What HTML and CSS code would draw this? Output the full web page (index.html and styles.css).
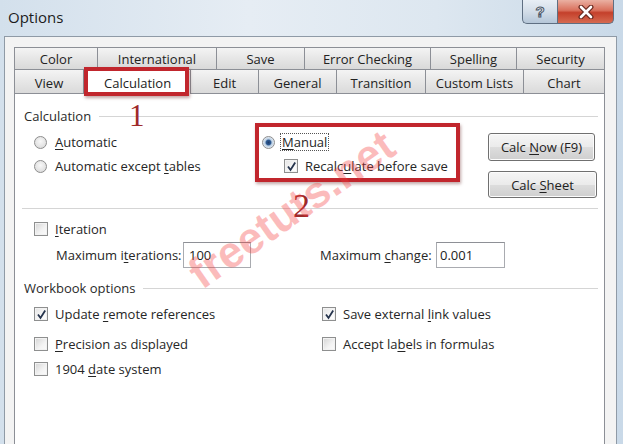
FILE: index.html
```html
<!DOCTYPE html>
<html>
<head>
<meta charset="utf-8">
<title>Options</title>
<link rel="stylesheet" href="styles.css">
</head>
<body>
<div class="window">
  <div class="titlebar">
    <span class="title">Options</span>
    <div class="caption-btns">
      <div class="cbtn help"><span class="qmark">?</span></div>
      <div class="cbtn close">
        <svg width="18" height="14" viewBox="0 0 18 14">
          <path d="M4 2 L14 12 M14 2 L4 12" stroke="#6a2a20" stroke-width="5" stroke-linecap="round" fill="none"/>
          <path d="M4 2 L14 12 M14 2 L4 12" stroke="#ffffff" stroke-width="2.6" stroke-linecap="round" fill="none"/>
        </svg>
      </div>
    </div>
  </div>

  <div class="frame">
    <div class="tabs">
      <div class="tabrow row1">
        <div class="tab">Color</div>
        <div class="tab">International</div>
        <div class="tab">Save</div>
        <div class="tab">Error Checking</div>
        <div class="tab">Spelling</div>
        <div class="tab">Security</div>
      </div>
      <div class="tabrow row2">
        <div class="tab">View</div>
        <div class="tab active">Calculation</div>
        <div class="tab">Edit</div>
        <div class="tab">General</div>
        <div class="tab">Transition</div>
        <div class="tab">Custom Lists</div>
        <div class="tab">Chart</div>
      </div>
    </div>

    <div class="panel">
      <div class="group-head"><span>Calculation</span><span class="rule"></span></div>

      <div class="calc">
        <div class="col-left">
          <div class="opt"><span class="radio"></span><span><u>A</u>utomatic</span></div>
          <div class="opt"><span class="radio"></span><span>Automatic except <u>t</u>ables</span></div>
        </div>
        <div class="col-mid">
          <div class="opt"><span class="radio on"></span><span class="focus"><u>M</u>anual</span></div>
          <div class="opt sub">
            <span class="check on"><svg width="11" height="11" viewBox="0 0 11 11"><path d="M2 5.5 L4.5 9 L9.2 1.5" stroke="#26344d" stroke-width="1.8" fill="none"/></svg></span>
            <span>Recalc<u>u</u>late before save</span>
          </div>
        </div>
        <div class="col-btns">
          <div class="btn b1"><span>Calc <u>N</u>ow (F9)</span></div>
          <div class="btn b2"><span>Calc <u>S</u>heet</span></div>
        </div>
      </div>

      <div class="sep"></div>

      <div class="opt iter"><span class="check"></span><span><u>I</u>teration</span></div>
      <div class="maxrow">
        <span class="lbl1">Maximum i<u>t</u>erations:</span>
        <span class="field f1">100</span>
        <span class="lbl2">Maximum <u>c</u>hange:</span>
        <span class="field f2">0.001</span>
      </div>

      <div class="group-head wb"><span>Workbook options</span><span class="rule"></span></div>

      <div class="wbgrid">
        <div class="opt r1"><span class="check on"><svg width="11" height="11" viewBox="0 0 11 11"><path d="M2 5.5 L4.5 9 L9.2 1.5" stroke="#26344d" stroke-width="1.8" fill="none"/></svg></span><span>Update <u>r</u>emote references</span></div>
        <div class="opt r1"><span class="check on"><svg width="11" height="11" viewBox="0 0 11 11"><path d="M2 5.5 L4.5 9 L9.2 1.5" stroke="#26344d" stroke-width="1.8" fill="none"/></svg></span><span>Save external <u>l</u>ink values</span></div>
        <div class="opt r2"><span class="check"></span><span><u>P</u>recision as displayed</span></div>
        <div class="opt r2"><span class="check"></span><span>Accept la<u>b</u>els in formulas</span></div>
        <div class="opt r3"><span class="check"></span><span>1904 <u>d</u>ate system</span></div>
      </div>
    </div>
  </div>
</div>

<div class="annot">
  <div class="redbox box1"></div>
  <div class="redbox box2"></div>
  <div class="num n1">1</div>
  <div class="num n2">2</div>
  <div class="watermark">freetuts.net</div>
</div>
</body>
</html>
```

FILE: styles.css
```css
* { box-sizing: border-box; }
html, body { margin: 0; padding: 0; }
body {
  width: 623px;
  height: 444px;
  overflow: hidden;
  position: relative;
  font-family: "Open Sans", "Noto Sans", sans-serif;
  font-size: 12.5px;
  color: #262626;
  background: linear-gradient(90deg, #d3e0ec 0%, #e6edf4 40%, #dde7f0 70%, #c9d9e8 100%);
}
u { text-decoration: underline; text-underline-offset: 2px; }

.window { height: 444px; display: flex; flex-direction: column; }

.titlebar {
  height: 36px;
  display: flex;
  align-items: flex-start;
  padding-left: 8px;
  flex: none;
}
.title {
  font-size: 15px;
  color: #1c1c1c;
  margin-top: 7px;
}
.caption-btns {
  margin-left: auto;
  margin-right: 9px;
  display: flex;
  height: 24px;
}
.cbtn {
  height: 24px;
  border: 1px solid #5f6f82;
  border-top: none;
  display: flex;
  align-items: center;
  justify-content: center;
}
.help {
  width: 35px;
  border-right: none;
  border-radius: 0 0 0 5px;
  background: linear-gradient(180deg, #e8eef5 0%, #d3dde8 50%, #b5c6d8 100%);
}
.qmark {
  font-family: "Liberation Sans", sans-serif;
  font-weight: bold;
  font-size: 15px;
  color: #ffffff;
  -webkit-text-stroke: 1px #4a5566;
  line-height: 1;
}
.close {
  width: 57px;
  border-radius: 0 0 5px 0;
  background: linear-gradient(180deg, #eab0a2 0%, #d9705c 45%, #c4402b 55%, #d66a50 100%);
}

.frame {
  flex: 1;
  margin: 0 6px 0 4px;
  background: #f3f3f3;
  border: 1px solid #8f9aa6;
  border-bottom: none;
  padding: 10px 11px 0 9px;
  display: flex;
  flex-direction: column;
}

.tabs { flex: none; }
.tabrow { display: grid; }
.row1 { grid-template-columns: 83px 119px 88px 126px 86px 89px; height: 22px; }
.row2 { grid-template-columns: 69px 107px 68px 78px 89px 98px 82px; height: 24px; }
.tab {
  border-top: 1px solid #8c8f96;
  border-left: 1px solid #8c8f96;
  background: linear-gradient(180deg, #f4f4f4 0%, #e6e6e6 50%, #d9d9d9 100%);
  display: flex;
  align-items: center;
  justify-content: center;
  font-size: 13px;
  color: #222;
  white-space: nowrap;
}
.tab:last-child { border-right: 1px solid #8c8f96; }
.row2 .tab { padding-top: 1px; }
.tab.active {
  background: #ffffff;
  position: relative;
  z-index: 1;
  height: 25px;
  justify-content: flex-start;
  padding-left: 20px;
}

.panel {
  flex: 1;
  background: #ffffff;
  border: 1px solid #8c8f96;
  border-bottom: none;
  padding: 12px 6px 0 9px;
}

.group-head {
  display: flex;
  align-items: center;
  height: 20px;
  color: #2a2a2a;
  font-size: 13px;
}
.group-head .rule {
  flex: 1;
  height: 1px;
  background: #d5d5d5;
  margin-left: 8px;
}

.opt {
  display: flex;
  align-items: center;
  height: 24px;
  white-space: nowrap;
  font-size: 13px;
}

.radio {
  width: 13px;
  height: 13px;
  border-radius: 50%;
  border: 1px solid #8d8d8d;
  background: radial-gradient(circle at 50% 40%, #f8f8f8 0%, #dcdcdc 80%);
  margin-right: 8px;
  flex: none;
}
.radio.on {
  background: radial-gradient(circle, #1d3b6b 0%, #2e5b93 30%, #b9cde2 45%, #eef3f8 80%);
}
.check {
  width: 14px;
  height: 14px;
  border: 1px solid #8e8f8f;
  background: linear-gradient(135deg, #d4d4d4 0%, #f3f3f3 60%, #fbfbfb 100%);
  box-shadow: inset 0 0 0 1px #f2f2f2;
  margin-right: 7px;
  flex: none;
  display: flex;
  align-items: center;
  justify-content: center;
}
.check.on { background: linear-gradient(135deg, #e4e4e4 0%, #f8f8f8 60%, #ffffff 100%); }

.calc {
  display: flex;
  margin-top: 4px;
  height: 68px;
}
.col-left { width: 238px; padding-left: 10px; }
.col-mid { width: 226px; }
.col-mid .focus {
  border: 1px dotted #555;
  padding: 0 1px;
  margin-left: -3px;
  line-height: 16px;
}
.col-mid .sub { padding-left: 22px; }
.col-btns {
  display: flex;
  flex-direction: column;
  gap: 10px;
  padding-top: 3px;
}
.btn {
  height: 28px;
  width: 107px;
  border: 1px solid #707070;
  border-radius: 3px;
  background: linear-gradient(180deg, #f6f6f6 0%, #ebebeb 50%, #dddddd 51%, #cfcfcf 100%);
  box-shadow: inset 0 0 0 1px #fcfcfc;
  display: flex;
  align-items: center;
  justify-content: center;
  font-size: 13px;
  color: #222;
  white-space: nowrap;
}
.btn.b2 { width: 109px; height: 27px; }

.sep {
  height: 1px;
  background: #d5d5d5;
  margin: 10px 0 0 -2px;
}

.iter { margin-top: 9px; height: 22px; padding-left: 10px; }

.maxrow {
  display: flex;
  align-items: center;
  height: 26px;
  margin-top: 2px;
  font-size: 13px;
  white-space: nowrap;
}
.lbl1 { margin-left: 32px; width: 127px; }
.lbl2 { margin-left: 69px; width: 116px; }
.field {
  height: 26px;
  width: 68px;
  border: 1px solid #a9abb0;
  border-top-color: #8e9096;
  background: #fff;
  display: flex;
  align-items: center;
  padding-left: 5px;
  color: #222;
}
.f2 { width: 69px; padding-left: 3px; }

.group-head.wb { margin-top: 10px; }

.wbgrid {
  display: grid;
  grid-template-columns: 288px 1fr;
  margin-top: 4px;
  padding-left: 10px;
}
.wbgrid .r2 { margin-top: 6px; }
.wbgrid .r3 { margin-top: 1px; }

.annot { position: absolute; left: 0; top: 0; width: 623px; height: 444px; pointer-events: none; z-index: 5; }
.redbox {
  position: absolute;
  border: 4px solid #c1262d;
  box-shadow: 1px 2px 3px rgba(80, 0, 0, 0.35);
}
.box1 { left: 84px; top: 67px; width: 105px; height: 29px; }
.box2 { left: 255px; top: 123px; width: 205px; height: 59px; }
.num {
  position: absolute;
  font-family: "Liberation Serif", serif;
  color: #9e2a2a;
  line-height: 1;
}
.n1 { left: 129px; top: 100px; font-size: 31px; }
.n2 { left: 293px; top: 189px; font-size: 34px; }
.watermark {
  position: absolute;
  left: 206px;
  top: 252px;
  font-family: "Liberation Sans", sans-serif;
  font-weight: bold;
  font-size: 44px;
  color: rgba(245, 60, 60, 0.34);
  transform: rotate(-35deg);
  transform-origin: left bottom;
  line-height: 1;
  white-space: nowrap;
}
```
